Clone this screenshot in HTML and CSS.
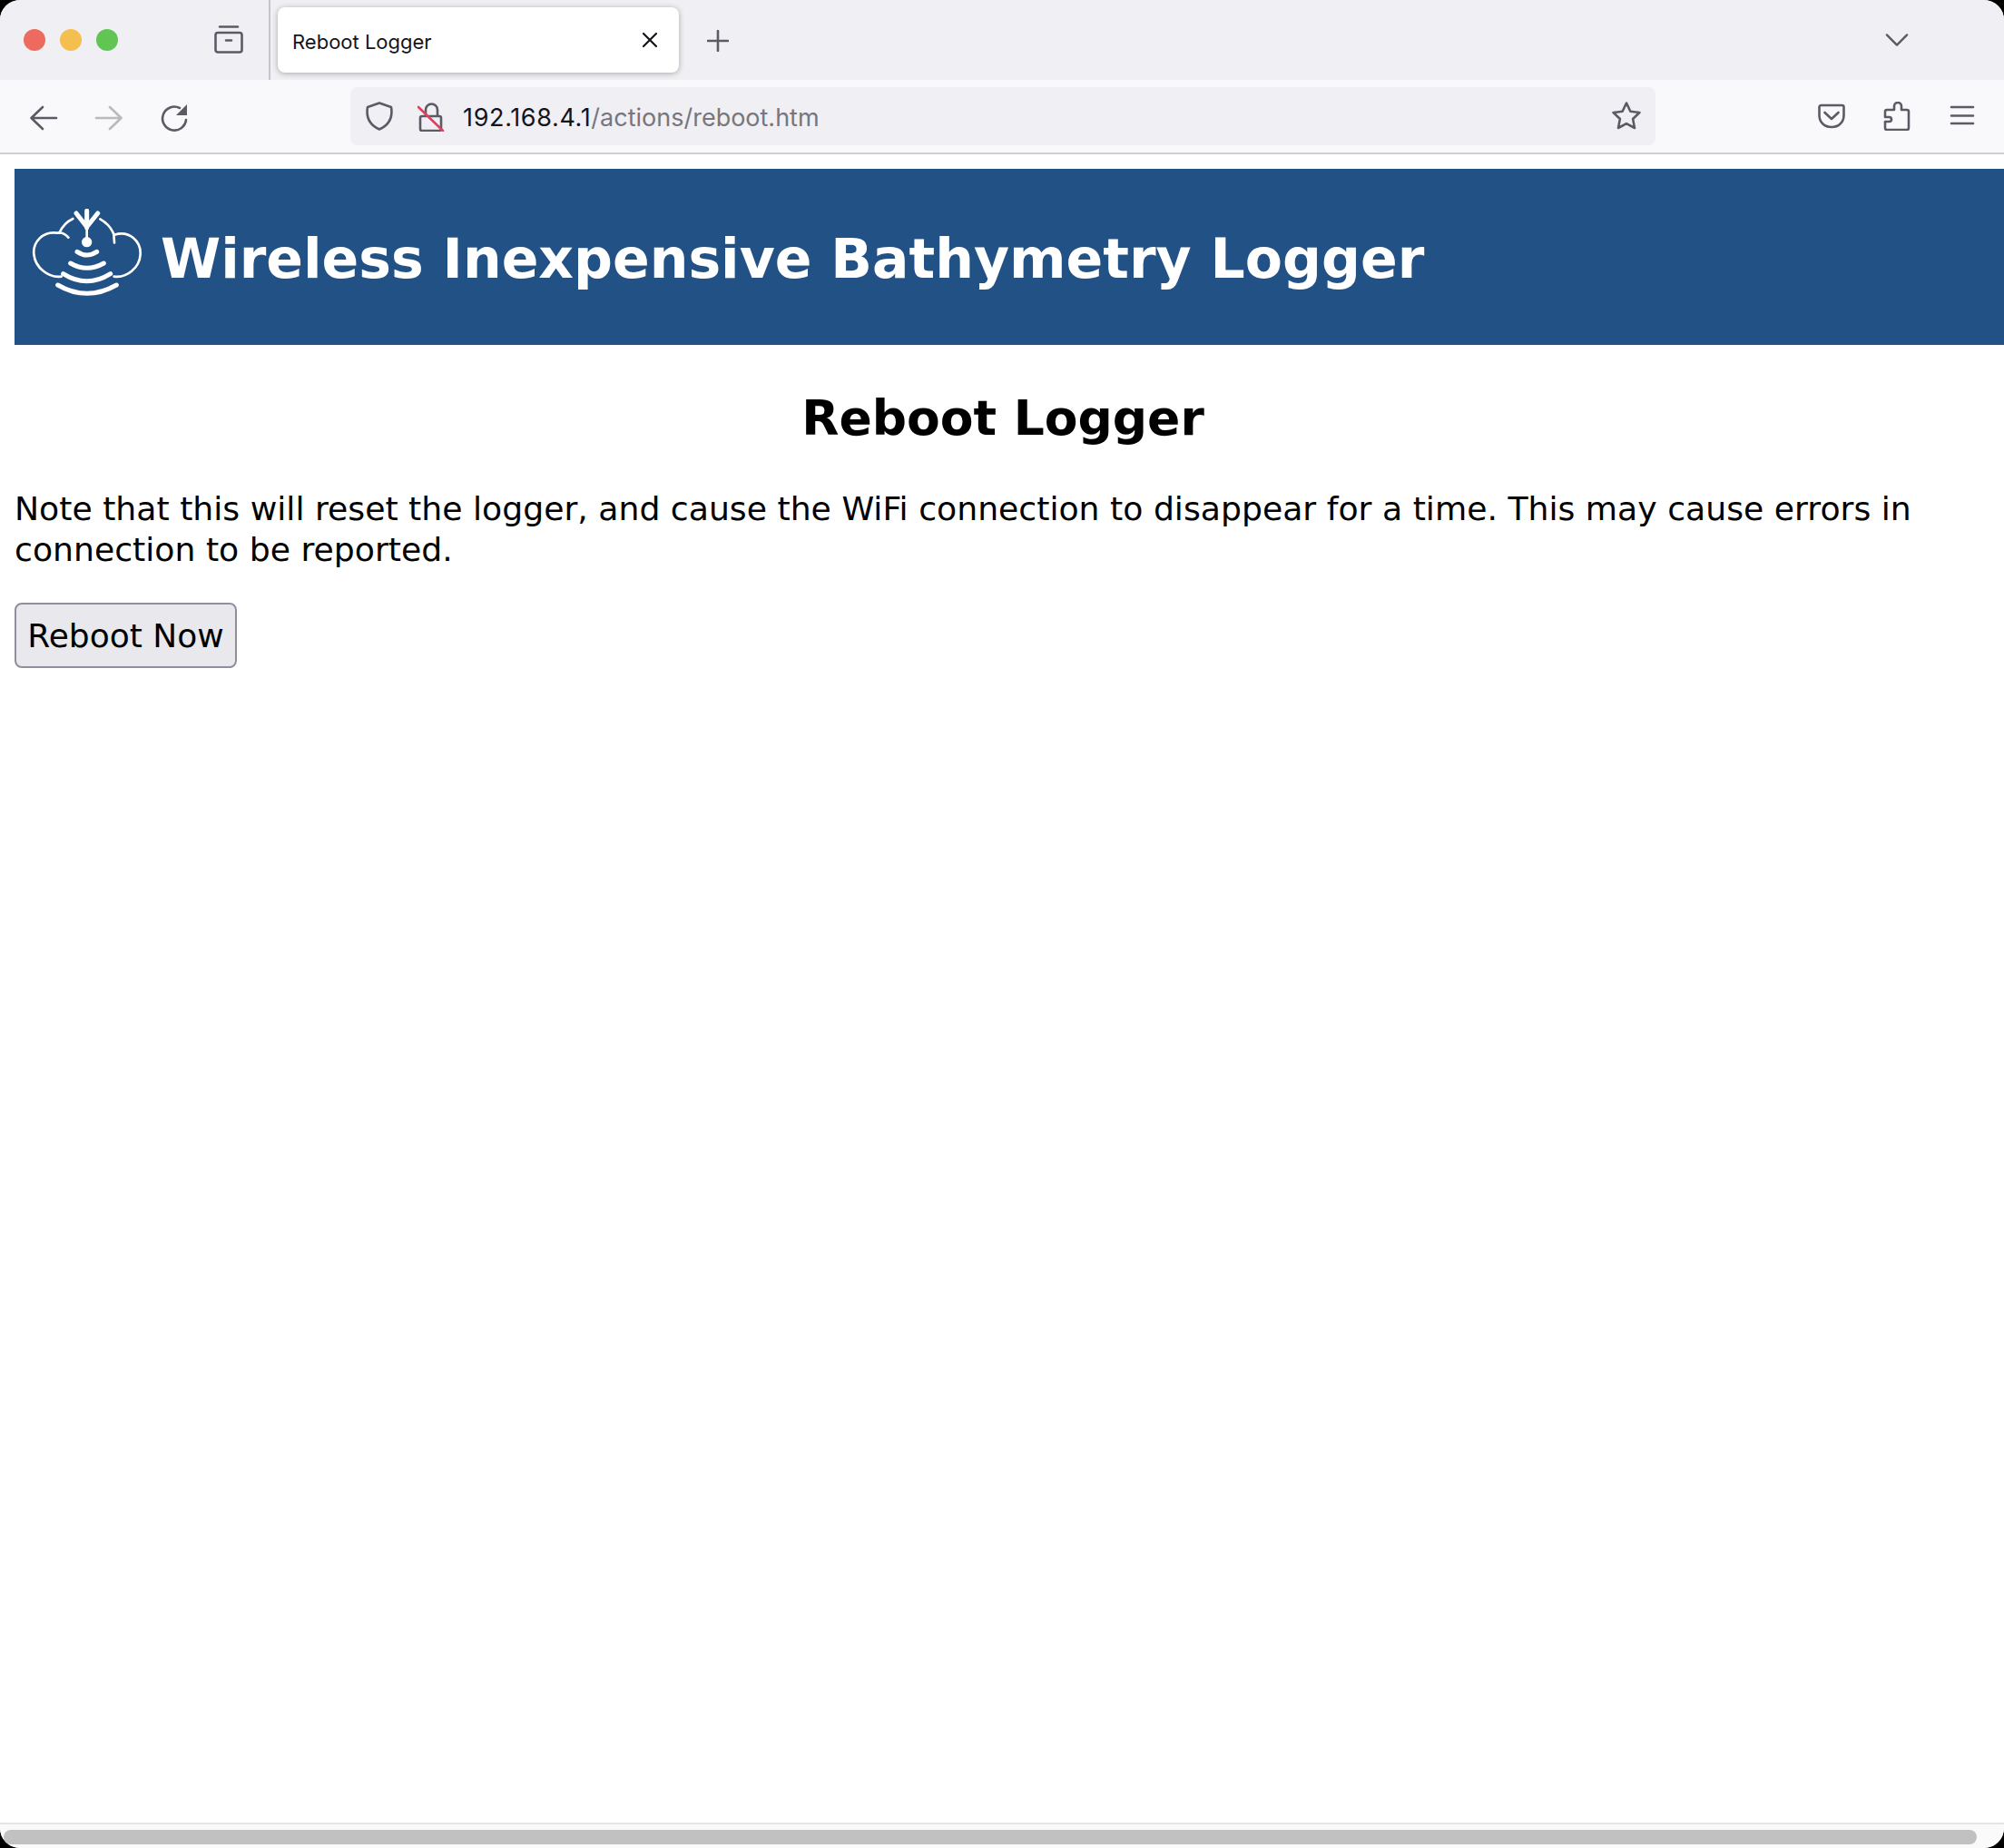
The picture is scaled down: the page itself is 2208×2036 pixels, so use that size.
FILE: index.html
```html
<!DOCTYPE html>
<html lang="en">
<head>
  <meta charset="UTF-8" />
  <title>Reboot Logger</title>
  <link rel="stylesheet" href="styles.css">
</head>
<body>
  <div class="window">

    <div class="tabbar">
      <div class="lights">
        <span class="light red"></span>
        <span class="light yellow"></span>
        <span class="light green"></span>
      </div>
      <svg class="icon view-icon" viewBox="0 0 32 32"><path d="M6 1.500h20M1.500 26V10.500a2.500 2.500 0 0 1 2.500-2.500h24a2.500 2.500 0 0 1 2.500 2.500V27a2.500 2.500 0 0 1-2.500 2.500H4A2.500 2.500 0 0 1 1.500 27zM13 16.500h6"/></svg>
      <span class="tab-divider"></span>
      <div class="tab">
        <span class="tab-title">Reboot Logger</span>
        <svg class="close-icon" viewBox="0 0 20 20"><path d="M3 3l14 14M17 3L3 17"/></svg>
      </div>
      <svg class="icon plus-icon" viewBox="0 0 24 24"><path d="M12 1v22M1 12h22"/></svg>
      <svg class="icon chevron-icon" viewBox="0 0 28 16"><path d="M2 2l12 12L26 2"/></svg>
    </div>

    <div class="toolbar">
      <svg class="icon nav" viewBox="0 0 32 32"><path d="M30 16H3M15 4L2.500 16 15 28"/></svg>
      <svg class="icon nav faded" viewBox="0 0 32 32"><path d="M2 16h27M17 4l12.500 12L17 28"/></svg>
      <svg class="icon nav" viewBox="0 0 32 32"><path d="M29 18A13 13 0 1 1 22 5"/><path class="solid" d="M30 1v12H18z"/></svg>

      <div class="urlbar">
        <svg class="icon small shield" viewBox="0 0 30 32"><path d="M15 1.500L28 6c1.500 9-.5 19-13 24.500C2.500 25 .5 15 2 6z"/></svg>
        <svg class="icon small lock" viewBox="0 0 30 32"><path d="M5 15h19a2 2 0 0 1 2 2v12a2 2 0 0 1-2 2H5a2 2 0 0 1-2-2V17a2 2 0 0 1 2-2zM9 15V8a6.500 6.500 0 0 1 13 0v7"/><path class="strike" d="M1 5l27 26"/></svg>
        <span class="url"><span class="host">192.168.4.1</span>/actions/reboot.htm</span>
        <svg class="icon star" viewBox="0 0 32 32"><path d="M16 1.500l4.400 9.200 10 1.300-7.300 7 1.900 10L16 24.100 7 29l1.900-10-7.300-7 10-1.300z"/></svg>
      </div>

      <svg class="icon pocket" viewBox="0 0 32 32"><path d="M4.500 4h23a2 2 0 0 1 2 2v9c0 8-6 13-13.500 13S2.500 23 2.500 15V6a2 2 0 0 1 2-2zM8.500 12l7.500 7 7.500-7"/></svg>
      <svg class="icon" viewBox="0 0 32 32"><path d="M5 31h22a2 2 0 0 0 2-2V11a2 2 0 0 0-2-2h-6V5a4 4 0 0 0-8 0v4H5a2 2 0 0 0-2 2v6h4.500a2.500 2.500 0 0 1 0 5H3v7a2 2 0 0 0 2 2z"/></svg>
      <svg class="icon" viewBox="0 0 32 32"><path d="M4 6h24M4 15.500h24M4 24h24"/></svg>
    </div>

    <main class="page">
      <div class="banner">
        <svg class="logo" viewBox="105 178 366 294">
          <g class="logo-thin">
            <path d="M226 273C214 258 202 256 190 258C140 250 108 290 112 328C116 372 160 408 203 402"/>
            <path d="M196 258C206 236 222 220 241 211"/>
            <path d="M331 212C352 224 368 240 376 262L378 290"/>
            <path d="M378 264C430 248 466 288 464 328C462 372 420 408 377 402"/>
            <path d="M287 240V280"/>
          </g>
          <g class="logo-thick">
            <path d="M287 185V240M252 193L287 238L323 193"/>
            <path d="M255 320Q287 342 320 320"/>
            <path d="M233 358Q287 390 343 358"/>
            <path d="M209 393Q287 442 365 393"/>
            <path d="M191 430Q287 486 385 430"/>
          </g>
          <circle cx="287" cy="288" r="17"/>
        </svg>
        <span class="banner-title">Wireless Inexpensive Bathymetry Logger</span>
      </div>

      <h1>Reboot Logger</h1>
      <p>Note that this will reset the logger, and cause the WiFi connection to disappear for a time. This may cause errors in connection to be reported.</p>
      <button class="reboot-btn" type="button">Reboot Now</button>
    </main>

    <div class="scrollbar">
      <div class="scroll-thumb"></div>
    </div>

  </div>
</body>
</html>
```

FILE: styles.css
```css
* {
  margin: 0;
  padding: 0;
  box-sizing: border-box;
}

html, body {
  width: 2208px;
  height: 2036px;
  overflow: hidden;
  background: #000;
}

.window {
  width: 2208px;
  height: 2036px;
  display: flex;
  flex-direction: column;
  background: #fff;
  border-radius: 22px;
  overflow: hidden;
}

/* browser chrome */
.icon {
  width: 32px;
  height: 32px;
  flex: none;
  fill: none;
  stroke: #5b5b66;
  stroke-width: 2.6;
  stroke-linecap: round;
  stroke-linejoin: round;
}

.icon .solid {
  fill: #5b5b66;
  stroke: none;
}

.nav {
  margin-top: 3px;
}

.faded {
  opacity: 0.4;
}

.tabbar {
  height: 88px;
  flex: none;
  display: flex;
  align-items: center;
  background: #f0f0f4;
}

.lights {
  display: flex;
  gap: 16px;
  margin-left: 26px;
}

.light {
  width: 24px;
  height: 24px;
  border-radius: 50%;
}

.red { background: #ed6a5e; }
.yellow { background: #f5bf4f; }
.green { background: #61c554; }

.view-icon {
  margin-left: 106px;
}

.tab-divider {
  width: 2px;
  align-self: stretch;
  margin-left: 28px;
  background: #c4c4cb;
}

.tab {
  width: 442px;
  height: 72px;
  margin-left: 8px;
  padding: 0 22px 0 16px;
  display: flex;
  align-items: center;
  justify-content: space-between;
  background: #fff;
  border-radius: 8px;
  box-shadow: 0 1px 6px rgba(0, 0, 0, 0.3);
}

.tab-title {
  padding-top: 3px;
  font-family: Inter, "Liberation Sans", sans-serif;
  font-size: 22px;
  color: #15141a;
}

.close-icon {
  width: 20px;
  height: 20px;
  fill: none;
  stroke: #15141a;
  stroke-width: 2.2;
  stroke-linecap: round;
}

.plus-icon {
  width: 24px;
  height: 24px;
  margin-left: 31px;
  margin-top: 2px;
}

.chevron-icon {
  width: 26px;
  height: 16px;
  margin-left: auto;
  margin-right: 105px;
}

.toolbar {
  height: 80px;
  flex: none;
  display: flex;
  align-items: center;
  gap: 40px;
  padding: 0 30px 0 32px;
  background: #f9f9fb;
}

.urlbar {
  flex: 1;
  height: 64px;
  margin: 0 0 0 138px;
  padding: 0 16px 0 17px;
  display: flex;
  align-items: center;
  background: #f0f0f4;
  border-radius: 8px;
}

.small {
  width: 30px;
  height: 32px;
}

.lock {
  margin-left: 27px;
  margin-top: 2px;
}

.strike {
  stroke: #e0405f;
}

.url {
  margin-left: 20px;
  padding-top: 2px;
  font-family: Inter, "Liberation Sans", sans-serif;
  font-size: 27px;
  color: #77767e;
}

.host {
  color: #15141a;
  letter-spacing: 0.65px;
}

.star {
  margin-left: auto;
}

.pocket {
  margin-left: 138px;
}

/* page */
.page {
  flex: 1;
  min-height: 0;
  border-top: 2px solid #cfcfd8;
  padding: 16px 14px 0 16px;
  font-family: "DejaVu Sans", Verdana, sans-serif;
  color: #000;
  overflow: hidden;
}

.banner {
  width: 2192px;
  height: 194px;
  padding-left: 19px;
  display: flex;
  align-items: flex-start;
  gap: 20px;
  background: #225285;
}

.logo {
  width: 122px;
  height: 98px;
  margin-top: 44px;
  fill: #fff;
  stroke: #fff;
  stroke-linecap: round;
  stroke-linejoin: round;
}

.logo g {
  fill: none;
}

.logo circle {
  stroke: none;
}

.logo-thin {
  stroke-width: 8;
}

.logo-thick {
  stroke-width: 15;
}

.banner-title {
  margin-top: 64px;
  font-size: 60px;
  font-weight: bold;
  color: #fff;
}

.page h1 {
  margin: 49px 0 46px;
  font-size: 53.5px;
  font-weight: bold;
  text-align: center;
}

.page p {
  font-size: 36.2px;
  line-height: 45px;
}

.reboot-btn {
  display: block;
  margin-top: 36px;
  width: 245px;
  height: 72px;
  font-family: "DejaVu Sans", Verdana, sans-serif;
  font-size: 36px;
  color: #000;
  background: #e9e9ed;
  border: 2px solid #8f8f9d;
  border-radius: 8px;
}

/* horizontal page scrollbar */
.scrollbar {
  height: 28px;
  flex: none;
  padding: 6px 30px 4px 4px;
  border-top: 2px solid #e5e5e5;
  background: #fafafa;
}

.scroll-thumb {
  height: 16px;
  background: #c1c1c1;
  border-radius: 8px;
}
```
